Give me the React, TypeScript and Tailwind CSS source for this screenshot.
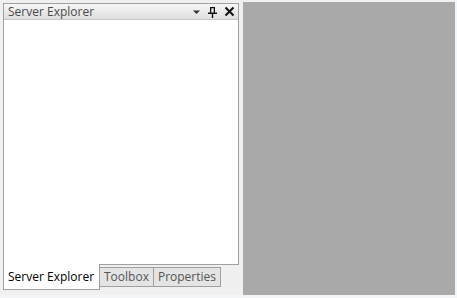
import React from "react";

function DropIcon() {
  return (
    <svg width="9" height="6" viewBox="0 0 9 6" className="block">
      <path d="M1 1.5h7L4.5 5z" fill="#333" />
    </svg>
  );
}

function PinIcon() {
  return (
    <svg width="11" height="12" viewBox="0 0 11 12" className="block">
      <path d="M3 1h5v1.2H3zM3 1h1.3v5.5H3zM6.7 1H8v5.5H6.7zM1 6.5h9v1.4H1zM4.8 7.5h1.4v4.5H4.8z" fill="#111" />
    </svg>
  );
}

function CloseIcon() {
  return (
    <svg width="11" height="11" viewBox="0 0 11 11" className="block">
      <path d="M1.5 1.5l8 8M9.5 1.5l-8 8" stroke="#111" strokeWidth="2" />
    </svg>
  );
}

const tabs = ["Toolbox", "Properties"];

export default function App() {
  return (
    <div className="w-[457px] h-[298px] bg-[#f3f6f9] overflow-hidden" style={{ fontFamily: '"Open Sans", "Noto Sans", sans-serif' }}>
      <div className="w-[455px] h-[295px] bg-[#f0f0f0] flex items-start">
        <div className="ml-[3px] mt-[3px] w-[236px] flex flex-col">
          <div className="h-[262px] border border-[#a0a0a0] bg-white flex flex-col">
            <div className="h-[16px] bg-gradient-to-b from-[#f7f7f7] to-[#dedede] border-b border-[#c8c8c8] flex items-center pl-[4px] pr-[3px]">
              <span className="text-[12px] leading-none text-[#4a4a4a] flex-1">Server Explorer</span>
              <div className="flex items-center gap-[6px]">
                <DropIcon />
                <PinIcon />
                <CloseIcon />
              </div>
            </div>
            <div className="flex-1" />
          </div>
          <div className="flex items-start -mt-px">
            <div className="w-[97px] h-[26px] bg-white border border-t-0 border-[#a0a0a0] flex items-center pl-[4px] pt-px">
              <span className="text-[12px] leading-none text-black">Server Explorer</span>
            </div>
            {tabs.map((t) => (
              <div
                key={t}
                className="mt-[3px] h-[20px] bg-[#e4e4e4] border border-l-0 border-[#a0a0a0] flex items-center px-[4px]"
              >
                <span className="text-[12px] leading-none text-[#555]">{t}</span>
              </div>
            ))}
          </div>
        </div>
        <div className="ml-[4px] mt-[2px] w-[212px] h-[293px] bg-[#a9a9a9]" />
      </div>
    </div>
  );
}
